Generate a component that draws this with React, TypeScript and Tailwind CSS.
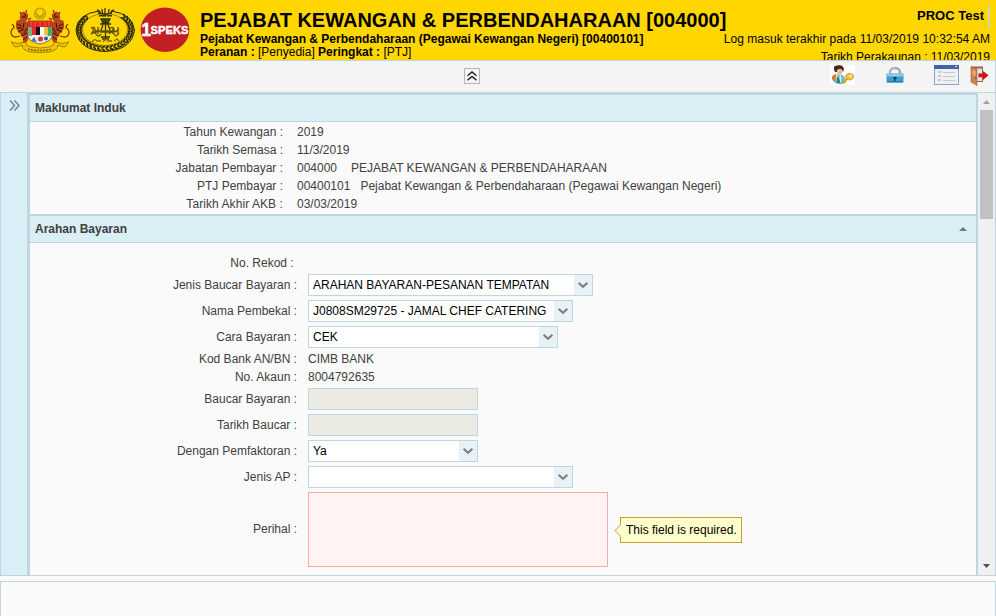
import React from 'react';

function CoatOfArms() {
  const tiger = (
    <g transform="translate(1 -1)">
      <path d="M13 37 Q14 31 10 28 Q5 23 6 17 Q7 13 10 14 Q9 10 11 7 Q15 4 18 8 Q19 12 16 15 Q21 19 19 27 Q19 34 16 37 Z" fill="#b8481a" />
      <path d="M10 30 Q2 33 1 27 Q1 23 4 22 Q4 19 2 18" fill="none" stroke="#8c2f12" strokeWidth="1.3" />
      <path d="M7 18 l4 2 M7 22 l5 0 M8 26 l6 -3 M11 30 l6 -3 M12 11 l4 0 M14 17 l-1 5 M17 22 l-3 5 M17 31 l-4 3 M14 8 l2 2" stroke="#25160c" strokeWidth="1" fill="none" />
      <path d="M18 14 l3 -2" stroke="#b8481a" strokeWidth="2" />
      <path d="M11 8 l-1 -2 M16 6 l1 -2" stroke="#25160c" strokeWidth="1" />
    </g>
  );
  return (
    <svg className="h-[46px] w-[62px] shrink-0" viewBox="0 0 62 46">
      <circle cx="31" cy="6.5" r="5.200" fill="none" stroke="#a98e0c" strokeWidth="1.800" strokeDasharray="1.4 .6" />
      <path d="M28.500 4 a3.500 3.500 0 1 0 5 0 a3 3 0 1 1 -5 0" fill="#a58a08" />
      <g>{tiger}</g>
      <g transform="translate(62 0) scale(-1 1)">{tiger}</g>
      <path d="M19 14 H43 V30 Q41 35 31 37 Q21 35 19 30 Z" fill="#f3f0e6" stroke="#53401d" strokeWidth=".7" />
      <path d="M19 14 H43 V20 H19 Z" fill="#e5232b" />
      <path d="M22 15 v4 M26 15 v4 M31 15 v4 M36 15 v4 M40 15 v4" stroke="#ec8328" strokeWidth=".8" />
      <path d="M19.300 20 h3.700 v9 h-3.700 Z" fill="#7fa68a" />
      <path d="M38.500 20 H42.700 v9 h-4.200 Z" fill="#45aa5c" />
      <path d="M23 20 H27 V28 H23 Z" fill="#e32a31" />
      <path d="M27 20 H31 V28 H27 Z" fill="#15151a" />
      <path d="M31 20 H35 V28 H31 Z" fill="#fafafa" />
      <path d="M35 20 H38.500 V28 H35 Z" fill="#f0c729" />
      <path d="M22 34 l3 -4 l3 5 Z" fill="#397fc3" />
      <circle cx="31.500" cy="32" r="2.600" fill="#db3842" />
      <circle cx="37" cy="31.500" r="2" fill="#3557a3" />
      <path d="M2 35 Q8 38 16 35 Q17 39 22 40 Q31 42 40 40 Q45 39 46 35 Q54 38 60 35 L56 40 Q52 40 49 38 Q48 44 40 45 Q31 46 22 45 Q14 44 13 38 Q9 40 6 40 Z" fill="#efc500" stroke="#72610a" strokeWidth=".7" />
      <path d="M19 42 Q31 45 43 42" stroke="#66580d" strokeWidth="1.200" strokeDasharray="2 1" fill="none" />
    </svg>
  );
}

function StateCrest() {
  const leaves = Array.from({ length: 34 }, (_, i) => {
    const a = ((-62 + (i * 304) / 33) * Math.PI) / 180;
    return { x: 30 + Math.cos(a) * 26, y: 23 + Math.sin(a) * 18.5, r: (a * 180) / Math.PI + 90 };
  });
  return (
    <svg className="h-[46px] w-[61px] shrink-0" viewBox="0 0 61 46">
      <path d="M24 4 Q2 7 1 23 Q3 43 30 44.500 Q57 43 59.500 23 Q58 7 36 4" fill="none" stroke="#242308" strokeWidth="1" />
      <ellipse cx="30" cy="22.500" rx="22.500" ry="16" fill="none" stroke="#6e6206" strokeWidth=".7" />
      {leaves.filter((l) => l.y > 9).map((l, i) => (
        <g key={i} transform={`translate(${l.x} ${l.y}) rotate(${l.r})`}>
          <path d="M-3 -2.800 Q1 -3 2 0 Q-1 1 -3 -2.800 M-3 3 Q1 3 2 .5 Q-1 -.5 -3 3" fill="#302e08" />
        </g>
      ))}
      <path d="M22 3 q4 1 4 6 M27 2 l1 8 M30 1 v9 M34 2 l-1 8 M39 3 q-4 1 -4 6 M23 6 l14 3 M37 6 l-13 3" stroke="#39370a" strokeWidth="1.300" fill="none" />
      <path d="M26 12 h9 l-2 4 h-5 Z M25 17 h11 M28 18 l-2 5 M33 18 l2 5 M30.500 12 V31 M26 30 h9 M27 32 h7" stroke="#34320a" strokeWidth="1.300" fill="#5c520a" />
      <path d="M16 21 q4 -2 4 2 t4 0 M16 27 q3 -4 5 0 t5 0 M35 21 q4 -2 4 2 t5 -1 M34 27 q3 -4 5 0 t5 -1 M18 21 v6 M23 20 v7 M38 20 v7 M43 20 v7 M25 25 h10 M20 24 h20" stroke="#5b500a" strokeWidth="1.300" fill="none" />
      <path d="M17 35 q3 -4 5 -1 l4 0 m2 1 q3 -4 5 -1 h4 m2 0 l3 -2 2 2" stroke="#837306" strokeWidth="1.300" fill="none" />
    </svg>
  );
}

function SpeksLogo() {
  return (
    <svg className="h-[46px] w-[50px] shrink-0" viewBox="0 0 50 46">
      <ellipse cx="25" cy="22.700" rx="24.400" ry="22.200" fill="#c32026" />
      <text x="1.500" y="28.500" fill="#fff" stroke="#fff" strokeWidth=".6" fontFamily="Liberation Sans, sans-serif" fontSize="19" fontWeight="700" textLength="9.500" lengthAdjust="spacingAndGlyphs">1</text>
      <text x="10.500" y="26.500" fill="#fff" stroke="#fff" strokeWidth=".4" fontFamily="Liberation Sans, sans-serif" fontSize="10" fontWeight="700" textLength="38" lengthAdjust="spacingAndGlyphs">SPEKS</text>
    </svg>
  );
}

function UserKeyIcon() {
  return (
    <svg className="h-5 w-[25px]" viewBox="0 0 25 20">
      <path d="M0 0 H25 V20 H0 Z" fill="#fff" />
      <path d="M3 16 Q1 10 7 9.500 H11 Q15 10 16 17 Q13 20 8 19 Q4 18 3 16" fill="#7db9d6" />
      <path d="M2 14 Q1 10 6 9 L5 16 Q3 16 2 14" fill="#e8712a" />
      <path d="M6 9.500 L8.500 13 L11 10 V18 H7 Z" fill="#eef5f5" />
      <path d="M7 12 h2 l1.500 6 H6.500 Z" fill="#239164" />
      <path d="M6 3 Q12 0 13 5 Q12 10 9 10 Q6 8 6 3" fill="#efbd8c" />
      <path d="M5 7 Q2 1 7 .5 Q13 -1 14 4 L13 7 Q12 3 9 4 Q6 4 7 7 Z" fill="#442719" />
      <path d="M12 18 L18 13.500 M13.500 16 l1.500 2" stroke="#dc9c15" strokeWidth="2" />
      <path d="M16 10 Q20 6.500 23.500 10 Q24 15 19.500 15 Q14 14 16 10" fill="#f5c23c" stroke="#c98712" strokeWidth=".7" />
      <circle cx="20.500" cy="11" r="1.200" fill="#fff1bd" />
    </svg>
  );
}

function LockIcon() {
  return (
    <svg className="h-[18px] w-[18px]" viewBox="0 0 18 18">
      <path d="M4 10 V6 Q4.500 2.200 9 2.200 Q13.500 2.200 14 6 V10" fill="none" stroke="#9ba6ac" strokeWidth="2.200" />
      <path d="M4 9 V6 Q5 2.200 9 2.200" fill="none" stroke="#c5cbcf" strokeWidth="1" />
      <rect x=".5" y="7.500" width="17" height="9" rx="1" fill="#3e9dcc" />
      <rect x="1" y="7.500" width="16" height="3" fill="#8ccbe5" />
      <path d="M1 15.800 H17" stroke="#2179af" strokeWidth="1.200" />
      <path d="M7.500 11 h3 v2 h-1 v2 h-1.500 v-2 h-.5 Z" fill="#153c59" />
    </svg>
  );
}

function ListIcon() {
  return (
    <svg className="h-5 w-[25px]" viewBox="0 0 25 20" shapeRendering="crispEdges">
      <rect x=".5" y=".5" width="24" height="19" fill="#f0f0f0" stroke="#8aa5d0" />
      <rect width="25" height="4" fill="#4263a9" />
      <path d="M21 1.500 h2" stroke="#dce5f5" />
      <path d="M4 7 h3 M4 11 h3 M4 15 h3" stroke="#c5c9d2" strokeWidth="2" />
      <path d="M9 7.500 h12 M9 11.500 h12 M9 15.500 h12" stroke="#c8c8c8" />
    </svg>
  );
}

function ExitIcon() {
  return (
    <svg className="h-5 w-[19px]" viewBox="0 0 19 20">
      <path d="M1 .5 H13 V16 H1 Z" fill="#9b6544" />
      <path d="M6 2.500 H12 V15 H6 Z" fill="#e3e5e8" />
      <path d="M1 .5 L7 3 V19.500 L1 16 Z" fill="#cf8252" stroke="#a35d33" strokeWidth=".6" />
      <path d="M2.500 4 L5.500 5 V10 L2.500 9 Z" fill="#e9a878" />
      <circle cx="5.700" cy="12" r=".7" fill="#5e341e" />
      <path d="M8.500 7.500 H13 V5 L18.500 9.300 L13 14 V11.200 H8.500 Z" fill="#cf1016" />
    </svg>
  );
}

function Select({ value = '', width }: { value?: string; width: string }) {
  return (
    <div className={`flex h-[22px] border border-[#c0d6de] bg-white text-black ${width}`}>
      <span className="grow pl-1 leading-[20px] whitespace-pre">{value}</span>
      <span className="flex w-[18px] shrink-0 items-center justify-center bg-[#e7f2f7]">
        <svg className="h-[8px] w-[10px]" viewBox="0 0 10 8">
          <path d="M.6 1.800 L5 5.800 L9.400 1.800" fill="none" stroke="#818181" strokeWidth="2.200" />
        </svg>
      </span>
    </div>
  );
}

function Field({ label, height = 'h-[26px]', spacing = '', children }: { label: string; height?: string; spacing?: string; children?: React.ReactNode }) {
  return (
    <div className={`flex items-center ${height}`}>
      <div className="flex w-[278px] shrink-0 justify-end pr-[11px]"><span className={`whitespace-pre ${spacing}`}>{label}</span></div>
      {children}
    </div>
  );
}

function InfoRow({ label, value, spacing = '', extra, extraClass = '' }: { label: string; value: string; spacing?: string; extra?: string; extraClass?: string }) {
  return (
    <div className="flex h-[18px] items-center">
      <div className="flex w-[267px] shrink-0 justify-end pr-[14px]"><span className={`whitespace-pre ${spacing}`}>{label}</span></div>
      <span>{value}</span>
      {extra && <span className={`whitespace-pre ${extraClass}`}>{extra}</span>}
    </div>
  );
}

export default function App() {
  return (
    <div className="flex h-[616px] w-[996px] flex-col overflow-hidden bg-[#fafafa] font-['Liberation_Sans',Arial,sans-serif] text-[12px] leading-[14px] text-[#404040]">
      <header className="flex h-[60px] shrink-0 overflow-hidden bg-[#ffd600] text-black">
        <div className="flex shrink-0 pt-[7px] pl-[9px]">
          <CoatOfArms />
          <div className="ml-[4px]"><StateCrest /></div>
          <div className="ml-[4px]"><SpeksLogo /></div>
        </div>
        <div className="flex w-[524px] shrink-0 flex-col items-start pt-2 pl-[10px] whitespace-nowrap">
          <h1 className="h-[24px] text-[20px] leading-[24px] font-bold">PEJABAT KEWANGAN &amp; PERBENDAHARAAN [004000]</h1>
          <p className="h-[13px] leading-[15px] font-bold">Pejabat Kewangan &amp; Perbendaharaan (Pegawai Kewangan Negeri) [00400101]</p>
          <p className="h-[13px] leading-[15px]"><b>Peranan :</b> [Penyedia] <b>Peringkat :</b> [PTJ]</p>
        </div>
        <div className="flex grow flex-col items-end pt-[6px] pr-[6px] whitespace-nowrap">
          <div className="flex h-[22px] shrink-0 border-r-2 border-[#d4d4b4] pr-[4px] text-[13px] leading-[19px]"><span className="font-bold">PROC Test</span></div>
          <p className="mt-[2px] h-[18px] shrink-0 leading-[19px] tracking-[0.02px]">Log masuk terakhir pada 11/03/2019 10:32:54 AM</p>
          <p className="h-[18px] shrink-0 leading-[19px]">Tarikh Perakaunan : 11/03/2019</p>
        </div>
      </header>

      <nav className="flex h-[32px] shrink-0 border-t border-r border-[#b9d7e0] bg-[#f4f4f4] pl-[464px]">
        <button className="mt-[7px] flex h-4 w-4 items-center justify-center border border-[#b5b5b5] bg-[#f5f5f5]">
          <svg className="h-[10px] w-[10px]" viewBox="0 0 10 10">
            <path d="M.5 4.800 L5 1 L9.500 4.800 M.5 9.300 L5 5.500 L9.500 9.300" fill="none" stroke="#222" strokeWidth="1.400" />
          </svg>
        </button>
        <div className="ml-[350px] flex items-start pt-[4px]">
          <UserKeyIcon />
          <div className="mt-[1px] ml-[31px]"><LockIcon /></div>
          <div className="ml-[30px]"><ListIcon /></div>
          <div className="mt-[1px] ml-[11px]"><ExitIcon /></div>
        </div>
      </nav>

      <main className="flex h-[484px] shrink-0 border border-[#c0d6de]">
        <aside className="w-[26px] shrink-0 bg-[#daeef5] pt-[7px] pl-[8px]">
          <svg className="h-[11px] w-[11px]" viewBox="0 0 11 11">
            <path d="M1 .5 L5.500 5.500 L1 10.500 M5.500 .5 L10 5.500 L5.500 10.500" fill="none" stroke="#6d7b80" strokeWidth="1.300" />
          </svg>
        </aside>
        <div className="flex w-[951px] shrink-0 flex-col border-r-2 border-l-[3px] border-[#c0d6de]">
          <h2 className="h-[29px] shrink-0 border-t-2 border-b border-[#c0d6de] bg-[#daeef5] pl-[5px] text-[12px] leading-[27px] font-bold">Maklumat Induk</h2>
          <section className="h-[92px] shrink-0 pt-[1px]">
            <InfoRow label="Tahun Kewangan :" value="2019" />
            <InfoRow label="Tarikh Semasa :" value="11/3/2019" />
            <InfoRow label="Jabatan Pembayar :" value="004000" extra="PEJABAT KEWANGAN & PERBENDAHARAAN" extraClass="ml-[14px]" />
            <InfoRow label="PTJ Pembayar :" value="00400101" extra="Pejabat Kewangan & Perbendaharaan (Pegawai Kewangan Negeri)" extraClass="ml-[10px]" />
            <InfoRow label="Tarikh Akhir AKB :" value="03/03/2019" spacing="tracking-[0.07px]" />
          </section>
          <h2 className="flex h-[29px] shrink-0 items-center justify-between border-t-2 border-b border-[#c0d6de] bg-[#daeef5] pr-[9px] pl-[5px] text-[12px] font-bold">
            Arahan Bayaran
            <svg className="h-[4px] w-[8px]" viewBox="0 0 8 4"><path d="M0 4 L4 0 L8 4 Z" fill="#6c797e" /></svg>
          </h2>
          <section className="pt-[11px]">
            <Field label="No. Rekod : " height="h-[18px]" />
            <Field label="Jenis Baucar Bayaran :"><Select width="w-[285px]" value="ARAHAN BAYARAN-PESANAN TEMPATAN" /></Field>
            <Field label="Nama Pembekal :"><Select width="w-[265px]" value="J0808SM29725 - JAMAL CHEF CATERING" /></Field>
            <Field label="Cara Bayaran :"><Select width="w-[250px]" value="CEK" /></Field>
            <Field label="Kod Bank AN/BN :" height="h-[18px]"><span>CIMB BANK</span></Field>
            <Field label="No. Akaun :" height="h-[18px]"><span>8004792635</span></Field>
            <Field label="Baucar Bayaran :"><div className="h-[22px] w-[170px] border border-[#c0d6de] bg-[#ebebe4]" /></Field>
            <Field label="Tarikh Baucar :"><div className="h-[22px] w-[170px] border border-[#c0d6de] bg-[#ebebe4]" /></Field>
            <Field label="Dengan Pemfaktoran :"><Select width="w-[170px]" value="Ya" /></Field>
            <Field label="Jenis AP :"><Select width="w-[265px]" /></Field>
            <Field label="Perihal :" height="h-[79px]" spacing="block pb-[2px]">
              <div className="h-[75px] w-[300px] border border-[#ffa8a8] bg-[#fff3f3]" />
              <div className="relative mt-[1px] ml-3 h-[26px] w-[122px] border border-[#cc9933] bg-[#ffffcc] pl-[5px] leading-[24px] whitespace-nowrap text-black">
                <svg className="absolute top-[6px] left-[-7px] h-[13px] w-[7px]" viewBox="0 0 7 13"><path d="M7 .5 L1 6.500 L7 12.500" fill="#ffffcc" stroke="#dfc080" strokeWidth="1.200" /></svg>
                This field is required.
              </div>
            </Field>
          </section>
        </div>
        <div className="flex grow flex-col items-center bg-[#f0f0f0]">
          <div className="flex h-[17px] items-center"><svg className="h-[4px] w-[7px]" viewBox="0 0 7 4"><path d="M0 4 L3.500 0 L7 4 Z" fill="#a0a0a0" /></svg></div>
          <div className="h-[109px] w-[13px] bg-[#c1c1c1]" />
          <div className="mt-auto flex h-[18px] items-center"><svg className="h-[4px] w-[7px]" viewBox="0 0 7 4"><path d="M0 0 L3.500 4 L7 0 Z" fill="#505050" /></svg></div>
        </div>
      </main>
      <footer className="mt-[5px] grow border-t border-r border-l border-[#c0d6de] bg-[#fafafa]" />
    </div>
  );
}
